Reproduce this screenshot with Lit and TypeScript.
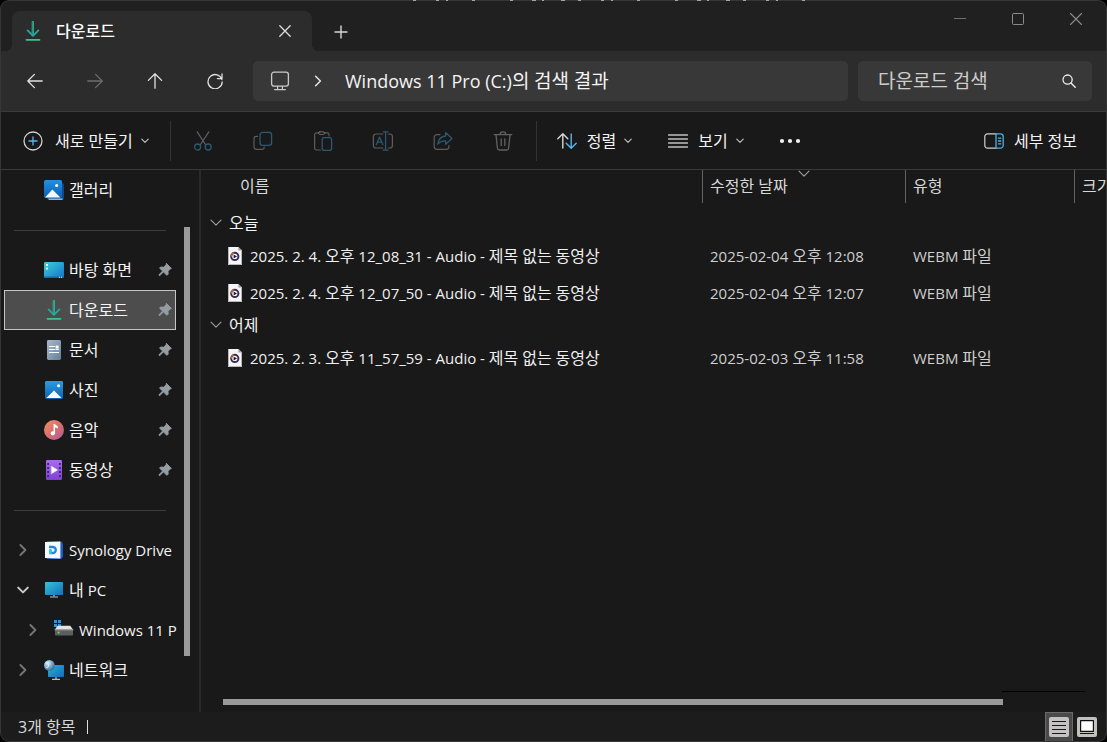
import { LitElement, html, svg, css, nothing } from "lit";
import type { TemplateResult } from "lit";
import { customElement, state } from "lit/decorators.js";
import { classMap } from "lit/directives/class-map.js";

const icon = (w: number, h: number, body: unknown) => html`<svg
  class="icon" width=${w} height=${h} viewBox="0 0 ${w} ${h}" fill="none"
  stroke-linecap="round" stroke-linejoin="round" aria-hidden="true">${body}</svg>`;

/* Hangul is set one pixel larger than the Latin text that surrounds it. */
const mixed = (text: string) => html`<span class="mixed">${text
  .split(/([\uac00-\ud7a3]+)/)
  .map((part, i) => (i % 2 ? html`<span class="ko">${part}</span>` : part))}</span>`;

const icons: Record<string, TemplateResult> = {
  download: icon(20, 20, svg`
    <defs><linearGradient id="dl" x1="0" y1="0" x2="0" y2="1"><stop offset="0" stop-color="#3cc08e"/><stop offset="1" stop-color="#1fa9a0"/></linearGradient></defs>
    <path d="M9.5 0.5h1v14h-1z" fill="url(#dl)" stroke="#2bb596" stroke-width=".8"/>
    <path d="M4.6 9.4 10 14.8l5.4-5.4" stroke="#22ab9d" stroke-width="1.8"/>
    <path d="M3.5 18.8h13" stroke="#38c48c" stroke-width="1.8"/>`),
  close: icon(12, 12, svg`<path d="M.8.8l10.4 10.4M11.2.8.8 11.2" stroke="#dedede" stroke-width="1.3"/>`),
  plus: icon(14, 14, svg`<path d="M7 1v12M1 7h12" stroke="#d6d6d6" stroke-width="1.4"/>`),
  min: icon(12, 12, svg`<path d="M0 5.5h12" stroke="#6f6f6f"/>`),
  max: icon(12, 12, svg`<rect x=".5" y=".5" width="11" height="11" rx="1" stroke="#8a8a8a"/>`),
  winClose: icon(12, 12, svg`<path d="M.5.5l11 11M11.5.5l-11 11" stroke="#8a8a8a" stroke-width="1.1"/>`),
  back: icon(16, 16, svg`<path d="M15.2 8H1M7.4 1.4.8 8l6.6 6.6" stroke="#e0e0e0" stroke-width="1.3"/>`),
  forward: icon(16, 16, svg`<path d="M.8 8H15M8.6 1.4 15.2 8l-6.6 6.6" stroke="#6c6c6c" stroke-width="1.3"/>`),
  up: icon(16, 16, svg`<path d="M8 15.2V1M1.4 7.4 8 .8l6.6 6.6" stroke="#e0e0e0" stroke-width="1.3"/>`),
  refresh: icon(16, 16, svg`<path d="M14.9 6.6A7.1 7.1 0 1 0 15.2 9M15 1v4.6h-4.6" stroke="#e0e0e0" stroke-width="1.3"/>`),
  monitor: icon(20, 20, svg`<rect x="1.6" y="1.2" width="16.8" height="14" rx="2.4" stroke="#c9c9c9" stroke-width="1.3"/><path d="M7.6 15.4v3M12.4 15.4v3M4.6 18.6h10.8" stroke="#c9c9c9" stroke-width="1.2"/>`),
  crumb: icon(8, 12, svg`<path d="M1.6 1.2 6.4 6l-4.8 4.8" stroke="#e6e6e6" stroke-width="1.5"/>`),
  search: icon(14, 14, svg`<circle cx="5.6" cy="5.6" r="4.6" stroke="#ededed" stroke-width="1.3"/><path d="M9 9l4.2 4.2" stroke="#ededed" stroke-width="1.4"/>`),
  caret: icon(8, 6, svg`<path d="M.8 1.2 4 4.4l3.2-3.2" stroke="#bdbdbd" stroke-width="1.2"/>`),
  create: icon(20, 20, svg`<circle cx="10" cy="10" r="9" stroke="#d2d2d2" stroke-width="1.3"/><path d="M10 6v8M6 10h8" stroke="#54b8ea" stroke-width="1.3"/>`),
  cut: icon(20, 20, svg`<path d="M4.2.8 12.8 14M15.8.8 7.2 14" stroke="#606060" stroke-width="1.2"/><circle cx="4.6" cy="16" r="3" stroke="#2c5872" stroke-width="1.3"/><circle cx="15.2" cy="16" r="3" stroke="#2c5872" stroke-width="1.3"/>`),
  copy: icon(20, 20, svg`<path d="M4.6 5.4H3.4A2.4 2.4 0 0 0 1 7.8v8A2.6 2.6 0 0 0 3.6 18.4h5.2a2.4 2.4 0 0 0 2.4-2.2" stroke="#5c5c5c" stroke-width="1.2"/><rect x="7" y="1.4" width="11.6" height="13" rx="2.6" stroke="#2c5872" stroke-width="1.3"/>`),
  paste: icon(20, 20, svg`<path d="M7.5 19H3.4A1.8 1.8 0 0 1 1.6 17.2V3.6a1.8 1.8 0 0 1 1.8-1.8H6M11 1.8h3.2A1.8 1.8 0 0 1 16 3.6V5" stroke="#5c5c5c" stroke-width="1.2"/><rect x="5.6" y=".8" width="6" height="2.6" rx="1.3" stroke="#6a6a6a"/><rect x="9.2" y="6.6" width="9.4" height="12.8" rx="1.8" stroke="#2c5872" stroke-width="1.3"/>`),
  rename: icon(22, 20, svg`<path d="M10.8 17H4A2.6 2.6 0 0 1 1.4 14.4V5.6A2.6 2.6 0 0 1 4 3h6.8M16.4 3h1.4a2.6 2.6 0 0 1 2.6 2.6v8.8a2.6 2.6 0 0 1-2.6 2.6h-1.4" stroke="#5c5c5c" stroke-width="1.2"/><path d="M4.4 13.6 7.6 6l3.2 7.6M5.4 11.2h4.4M13.6 1v18M11.2.8h4.8M11.2 19.2h4.8" stroke="#2c5872" stroke-width="1.3"/>`),
  share: icon(20, 20, svg`<path d="M7 3.6H4A2.8 2.8 0 0 0 1.2 6.4v9.2A2.8 2.8 0 0 0 4 18.4h9.2a2.8 2.8 0 0 0 2.8-2.8v-1.2" stroke="#5c5c5c" stroke-width="1.2"/><path d="M12.6 1.6 19 7.4l-6.4 5.8V9.8C9.4 9.6 7 10.6 4.8 13.2 5.4 8.6 8 5.4 12.6 5z" stroke="#2c5872" stroke-width="1.3"/>`),
  trash: icon(20, 20, svg`<path d="M1.2 3.6h17.6M7.2 3.4a2.8 2.6 0 0 1 5.6 0M3 3.8l1.4 13.4a2 2 0 0 0 2 1.8h7.2a2 2 0 0 0 2-1.8L17 3.8M8.2 8v6.4M11.8 8v6.4" stroke="#626262" stroke-width="1.3"/>`),
  sort: icon(20, 16, svg`<path d="M5.8 15V1M.8 5.8l5-5 5 5" stroke="#d8d8d8" stroke-width="1.4"/><path d="M14.2 1v14M9.2 10.2l5 5 5-5" stroke="#54b8ea" stroke-width="1.4"/>`),
  lines: icon(20, 14, svg`<path d="M.5 1h19M.5 5h19M.5 9h19M.5 13h19" stroke="#c0c0c0" stroke-width="1.3"/>`),
  more: icon(22, 6, svg`<circle cx="3" cy="3" r="2.1" fill="#f2f2f2"/><circle cx="11" cy="3" r="2.1" fill="#f2f2f2"/><circle cx="19" cy="3" r="2.1" fill="#f2f2f2"/>`),
  details: icon(20, 16, svg`<path d="M12 .8H3.6A2.8 2.8 0 0 0 .8 3.6v8.8a2.8 2.8 0 0 0 2.8 2.8H12" stroke="#cfcfcf" stroke-width="1.2"/><path d="M12 .8h4.4a2.8 2.8 0 0 1 2.8 2.8v8.8a2.8 2.8 0 0 1-2.8 2.8H12zM14.4 5.2h2.4M14.4 8h2.4M14.4 10.8h2.4" stroke="#4eb0e4" stroke-width="1.3"/>`),
  closed: icon(10, 14, svg`<path d="M2.4 2 7.4 7l-5 5" stroke="#747474" stroke-width="1.9"/>`),
  open: icon(12, 10, svg`<path d="M1.2 2.6 6 7.4l4.8-4.8" stroke="#cacaca" stroke-width="2"/>`),
  thin: icon(12, 8, svg`<path d="M1 1.2 6 6.2l5-5" stroke="#a0a0a0" stroke-width="1.1"/>`),
  pin: icon(16, 16, svg`<path d="M9.6 1.6 14.4 6.4 13 7l-2 2.4.2 2.8-1.4 1L6.4 9.9 2.6 13.8 1.8 13l3.8-4L2.6 6.2l1-1.2 3 .2L9 3z" fill="#969da2" stroke="#969da2" stroke-width=".9"/>`),
  gallery: icon(20, 20, svg`<defs><linearGradient id="gal" x1="0" y1="0" x2="0" y2="1"><stop stop-color="#2292e0"/><stop offset="1" stop-color="#0c5cb4"/></linearGradient></defs>
    <rect x="3" y="3" width="17" height="17" rx="2" fill="#0c4a8c"/><path d="M4 18.5h14.5V20H5z" fill="#8fb4e4"/><rect width="18" height="18" rx="1.6" fill="url(#gal)"/><path d="M1 17.4 8.4 9.6l8 7.8z" fill="#f2f7ff"/><circle cx="12.6" cy="5.4" r="1.5" fill="#fff"/>`),
  desktop: icon(20, 16, svg`<defs><linearGradient id="desk" x1="0" y1="0" x2="1" y2="1"><stop stop-color="#3bd0d8"/><stop offset="1" stop-color="#1474cc"/></linearGradient></defs>
    <rect width="20" height="16" rx="1.2" fill="url(#desk)"/><path d="M0 14.6h20v.4a1 1 0 0 1-1 1H1a1 1 0 0 1-1-1z" fill="#116aa4"/><path d="M2 2h2v2H2zM2 5.5h2v2H2zM15 14.8h1v1h-1zM17 14.8h1v1h-1z" fill="#e8fbff"/>`),
  doc: icon(14, 20, svg`<defs><linearGradient id="doc" x1="0" y1="0" x2="1" y2="1"><stop stop-color="#a9bacb"/><stop offset="1" stop-color="#647f9c"/></linearGradient></defs>
    <rect width="14" height="20" rx="1.4" fill="url(#doc)"/><path d="M2.5 6.5h5M2.5 9.5h5M2.5 12.5h9M9 9.5h2.5" stroke="#fff" stroke-width="1.2"/><path d="M8.6 5.6h3v3h-3z" fill="#fff"/>`),
  photo: icon(18, 18, svg`<defs><linearGradient id="ph" x1="0" y1="0" x2="0" y2="1"><stop stop-color="#2c9ce2"/><stop offset="1" stop-color="#0c62b2"/></linearGradient></defs>
    <rect width="18" height="18" rx="1.4" fill="url(#ph)"/><path d="M1.4 17 9 9.4l7.6 7.6z" fill="#f6faff"/><circle cx="13.6" cy="4.8" r="1.5" fill="#fff"/>`),
  music: icon(20, 20, svg`<defs><linearGradient id="mu" x1="0" y1="0" x2="1" y2="1"><stop stop-color="#f09064"/><stop offset=".5" stop-color="#d8706c"/><stop offset="1" stop-color="#a85aa0"/></linearGradient></defs>
    <circle cx="10" cy="10" r="10" fill="url(#mu)"/><path d="M10.3 4.6v8.4" stroke="#fff" stroke-width="1.5"/><path d="M10 4.6h1.2l2.6 1.6v2.2L10.4 7z" fill="#fff"/><circle cx="8.8" cy="13.3" r="2.1" fill="#fff"/>`),
  video: icon(16, 20, svg`<defs><linearGradient id="vi" x1="0" y1="0" x2="0" y2="1"><stop stop-color="#a86cea"/><stop offset="1" stop-color="#7e42d2"/></linearGradient></defs>
    <rect width="16" height="20" rx="1.2" fill="url(#vi)"/><path d="M1.2 3h1.8v2H1.2zM1.2 7h1.8v2H1.2zM1.2 11h1.8v2H1.2zM1.2 15h1.8v2H1.2zM13 3h1.8v2H13zM13 7h1.8v2H13zM13 11h1.8v2H13zM13 15h1.8v2H13z" fill="#40207c"/><path d="M5.6 6.4 11.4 10l-5.8 3.6z" fill="#fff" stroke="#fff" stroke-width=".6"/>`),
  synology: icon(18, 18, svg`<path d="M2 .4h14.6L18 3v13l-2 2H2z" fill="#1c5cc0"/><path d="M0 1l15.4-.6v17.2L0 17z" fill="#f7fafd"/><path d="M4 6h3.8a3 3 0 0 1 0 6H5.400V9" stroke="#2385e4" stroke-width="2.300" stroke-linecap="butt" stroke-linejoin="miter"/><path d="M5.400 8v5" stroke="#35c8e4" stroke-width="2.300" stroke-linecap="butt"/>`),
  pc: icon(18, 16, svg`<defs><linearGradient id="pc" x1="0" y1="0" x2="1" y2="1"><stop stop-color="#34c4d8"/><stop offset="1" stop-color="#1470bc"/></linearGradient></defs>
    <rect width="18" height="13" rx=".8" fill="url(#pc)"/><path d="M8 13h2v1.5H8z" fill="#74808a"/><path d="M5 14.5h8v1H5z" fill="#b6c0c8"/>`),
  drive: icon(20, 20, svg`<path d="M0 0h3v3H0zM4 0h3v3H4zM0 4h3v3H0zM4 4h3v3H4z" fill="#2c94dc"/><path d="M3.400 5.800h12.800L19 9.400H1z" fill="#e2e2e2"/><rect x="1" y="9.400" width="18" height="6.200" rx=".8" fill="#5c5f62"/><path d="M1 9.800h18" stroke="#c4c4c4" stroke-width=".8"/><circle cx="4.600" cy="12.600" r="1" fill="#5ee25e"/>`),
  network: icon(20, 20, svg`<defs><linearGradient id="ne" x1="0" y1="0" x2="1" y2="1"><stop stop-color="#2cb2d8"/><stop offset="1" stop-color="#126cba"/></linearGradient><radialGradient id="gl" cx=".35" cy=".3" r=".8"><stop stop-color="#e4f4fc"/><stop offset=".5" stop-color="#74a8cc"/><stop offset="1" stop-color="#2c5c8c"/></radialGradient></defs>
    <rect x="4" y="5" width="16" height="12" rx=".8" fill="url(#ne)"/><path d="M11 17h2v2h-2z" fill="#74808a"/><path d="M8 18.8h8v1.1H8z" fill="#b6c0c8"/><circle cx="5.4" cy="5.4" r="5.4" fill="url(#gl)"/><path d="M2 3c2 .2 3 1.6 2.4 3.2S3 8 2 7.4" stroke="#ddeef8"/>`),
  media: icon(14, 18, svg`<path d="M0 0h10.4L14 3.6V18H0z" fill="#f6f6f8"/><path d="M10.4 0v3.6H14z" fill="#9c9c9c"/><path d="M.5 0v17.5h13V4" stroke="#b8b8bc" stroke-linejoin="miter"/><circle cx="6.8" cy="9.4" r="3.6" fill="#fff" stroke="#3a2c52" stroke-width="2"/><path d="M3.2 9A3.6 3.6 0 0 1 5.600 6" stroke="#b8643c" stroke-width="1.600"/><path d="M5.600 7.400 9 9.400 5.600 11.400z" fill="#1e1a34"/>`),
  listView: icon(20, 20, svg`<rect width="20" height="20" rx="2" fill="#c4c2c3"/><path d="M3 4.500h14M3 8.500h14M3 12.500h14M3 16.500h14" stroke="#161616" stroke-linecap="butt"/>`),
  thumbView: icon(20, 20, svg`<rect width="20" height="20" rx="2" fill="#c0c0be"/><rect x="3.6" y="3.6" width="12.8" height="10.8" fill="#fff" stroke="#101010" stroke-width="1.2"/><path d="M3 16.5h14" stroke="#101010" stroke-linecap="butt"/>`),
};

interface Place { id: string; label: string; art: string; pinned?: boolean; toggle?: "open" | "closed"; child?: boolean }
interface FileRow { name: string; modified: string; kind: string }

const places: (Place | null)[] = [
  { id: "gallery", label: "갤러리", art: "gallery" },
  null,
  { id: "desktop", label: "바탕 화면", art: "desktop", pinned: true },
  { id: "downloads", label: "다운로드", art: "download", pinned: true },
  { id: "documents", label: "문서", art: "doc", pinned: true },
  { id: "pictures", label: "사진", art: "photo", pinned: true },
  { id: "music", label: "음악", art: "music", pinned: true },
  { id: "videos", label: "동영상", art: "video", pinned: true },
  null,
  { id: "synology", label: "Synology Drive", art: "synology", toggle: "closed" },
  { id: "pc", label: "내 PC", art: "pc", toggle: "open" },
  { id: "c", label: "Windows 11 P", art: "drive", toggle: "closed", child: true },
  { id: "network", label: "네트워크", art: "network", toggle: "closed" },
];

const groups: { label: string; files: FileRow[] }[] = [
  { label: "오늘", files: [
    { name: "2025. 2. 4. 오후 12_08_31 - Audio - 제목 없는 동영상", modified: "2025-02-04 오후 12:08", kind: "WEBM 파일" },
    { name: "2025. 2. 4. 오후 12_07_50 - Audio - 제목 없는 동영상", modified: "2025-02-04 오후 12:07", kind: "WEBM 파일" },
  ] },
  { label: "어제", files: [
    { name: "2025. 2. 3. 오후 11_57_59 - Audio - 제목 없는 동영상", modified: "2025-02-03 오후 11:58", kind: "WEBM 파일" },
  ] },
];

const base = css`
  * { box-sizing: border-box; }
  button, input { font: inherit; color: inherit; background: none; border: 0; padding: 0; margin: 0; }
  button { display: flex; align-items: center; justify-content: center; white-space: nowrap; }
  .icon { display: block; flex: none; }
  .mixed { font-size: 15px; white-space: pre; }
  .ko { font-size: 16px; }
`;

@customElement("explorer-sidebar")
class ExplorerSidebar extends LitElement {
  @state() private current = "downloads";

  static styles = [base, css`
    :host { display: flex; min-height: 0; border-right: 2px solid #2a2a2a; }
    ul { list-style: none; margin: 0; padding: 0 0 0 4px; width: 176px; flex: none; }
    li { height: 40px; }
    .rule { display: flex; align-items: center; padding: 0 10px; }
    .rule hr { flex: 1; margin: 0; border: 0; border-top: 1px solid #3d3d3d; }
    .place { width: 100%; height: 40px; justify-content: flex-start; padding: 0 2px 0 8px; border: 1px solid transparent; color: #f4f4f4; }
    .place.child { padding-left: 18px; }
    .place.current { background: #4d4d4d; border-color: #c4c4c4; }
    .toggle { flex: none; width: 20px; display: flex; justify-content: center; margin-right: 11px; }
    .art { flex: none; width: 20px; display: flex; justify-content: center; margin-right: 5px; }
    .label { flex: 1; text-align: left; }
    .scroll { flex: 1; display: flex; padding: 57px 8px 56px; }
    .thumb { width: 6px; background: #9a9a9a; }
  `];

  render() {
    return html`
      <ul>
        ${places.map((p) => p === null
          ? html`<li class="rule"><hr /></li>`
          : html`<li>
              <button class=${classMap({ place: true, child: !!p.child, current: p.id === this.current })}
                @click=${() => { this.current = p.id; }}>
                <span class="toggle">${p.toggle ? icons[p.toggle] : nothing}</span>
                <span class="art">${icons[p.art]}</span>
                <span class="label">${/[A-Z]/.test(p.label) ? mixed(p.label) : p.label}</span>
                ${p.pinned ? icons.pin : nothing}
              </button>
            </li>`)}
      </ul>
      <div class="scroll"><div class="thumb"></div></div>`;
  }
}

@customElement("file-list")
class FileList extends LitElement {
  static styles = [base, css`
    :host { display: flex; flex-direction: column; min-width: 0; overflow: hidden; }
    .view { flex: 1; min-height: 0; overflow: hidden; }
    table { width: 100%; table-layout: fixed; border-collapse: collapse; }
    .date { width: 203px; }
    .kind { width: 169px; }
    .size { width: 33px; }
    th { position: relative; padding: 0 0 6px; font-weight: 400; text-align: left; color: #d8d8d8; }
    th button { width: 100%; height: 33px; justify-content: flex-start; padding: 0 0 2px 7px; border-left: 1px solid #636363; }
    th:first-child button { padding-left: 39px; border: 0; }
    .sorted { position: absolute; top: 0; left: 50%; margin-left: -6px; }
    td { height: 37px; padding: 0 0 0 8px; white-space: nowrap; color: #cfcfcf; }
    td.name { padding-left: 27px; color: #f0f0f0; }
    .cell { display: flex; align-items: center; gap: 8px; }
    td.group { height: 28px; padding-left: 9px; }
    .group button { gap: 7px; color: #f4f4f4; }
    .line { height: 1px; width: 83px; margin: 0 22px 0 auto; background: #000; }
    .scroll { padding: 7px 104px 7px 22px; }
    .thumb { height: 6px; background: #9a989a; }
  `];

  render() {
    return html`
      <div class="view">
        <table>
          <colgroup><col /><col class="date" /><col class="kind" /><col class="size" /></colgroup>
          <thead>
            <tr>
              <th scope="col"><button>이름</button></th>
              <th scope="col"><button>수정한 날짜</button><span class="sorted">${icons.thin}</span></th>
              <th scope="col"><button>유형</button></th>
              <th scope="col"><button>크기</button></th>
            </tr>
          </thead>
          ${groups.map((g) => html`
            <tbody>
              <tr><td class="group" colspan="4"><button>${icons.thin}${g.label}</button></td></tr>
              ${g.files.map((f) => html`
                <tr>
                  <td class="name"><div class="cell">${icons.media}${mixed(f.name)}</div></td>
                  <td>${mixed(f.modified)}</td>
                  <td>${mixed(f.kind)}</td>
                  <td></td>
                </tr>`)}
            </tbody>`)}
        </table>
      </div>
      <div class="line"></div>
      <div class="scroll"><div class="thumb"></div></div>`;
  }
}

@customElement("app-root")
class AppRoot extends LitElement {
  @state() private layout = "list";

  static styles = [base, css`
    :host { display: block; background: #000; font: 16px/24px "Open Sans", "Noto Sans CJK KR", sans-serif; color: #f4f4f4; }
    .window { position: relative; display: flex; flex-direction: column; height: 100vh; background: #191919; border-radius: 9px; overflow: hidden; }
    .frame { position: absolute; inset: 0; border: 1px solid #363636; border-radius: 9px; pointer-events: none; }
    .specks { position: absolute; top: 0; left: 410px; }
    .title { display: flex; align-items: flex-start; height: 51px; padding: 0 2px 0 12px; background: #202020; }
    .tab { position: relative; display: flex; align-items: center; width: 300px; height: 40px; margin-top: 11px; padding: 0 12px 0 11px; background: #2c2c2c; border-radius: 8px 8px 0 0; }
    .tab::before, .tab::after { content: ""; position: absolute; bottom: 0; width: 6px; height: 6px; }
    .tab::before { left: -6px; background: radial-gradient(circle at 0 0, #202020 6px, #2c2c2c 6px); }
    .tab::after { right: -6px; background: radial-gradient(circle at 100% 0, #202020 6px, #2c2c2c 6px); }
    .tab .label { flex: 1; margin-left: 13px; font-weight: 500; color: #fff; }
    .tab button { width: 30px; height: 30px; }
    .add { width: 58px; height: 40px; margin-top: 12px; }
    .controls { display: flex; margin-left: auto; }
    .controls button { width: 58px; height: 38px; }
    .nav { display: flex; align-items: center; height: 60px; padding: 0 15px 0 5px; background: #2c2c2c; }
    .nav > button { width: 60px; height: 40px; }
    .address, .search { display: flex; align-items: center; height: 40px; background: #383838; border-radius: 5px; font-size: 19px; }
    .address { flex: 1; margin: 0 10px 0 8px; padding-left: 17px; }
    .address .crumb { width: 55px; display: flex; justify-content: center; }
    .address .mixed { font-size: 18px; }
    .address .ko { font-size: 19px; }
    .search { width: 234px; padding: 0 16px 0 20px; }
    .search input { flex: 1; min-width: 0; outline: 0; }
    .search input::placeholder { color: #cdcdcd; opacity: 1; }
    .tools { display: flex; align-items: center; height: 59px; border: solid #3a3a3a; border-width: 1px 0; }
    .tools button { height: 40px; gap: 10px; }
    .tools .caret { margin-left: -2px; }
    .tools .create { padding: 0 21px 0 23px; gap: 12px; }
    .tools .create .caret { margin-left: -4px; }
    .acts { display: flex; padding: 0 3px 0 2px; border: solid #333; border-width: 0 1px; }
    .acts button { width: 60px; }
    .tools .drop { padding: 0 0 0 20px; }
    .tools .view { padding-left: 36px; }
    .tools .more { padding: 0 15px; margin-left: 20px; }
    .tools .info { margin-left: auto; padding-right: 30px; }
    .body { flex: 1; min-height: 0; display: grid; grid-template-columns: 201px minmax(0, 1fr); }
    .status { display: flex; align-items: center; height: 30px; padding: 0 6px 0 18px; background: #1c1c1c; color: #d8d8d8; }
    .bar { width: 1px; height: 14px; margin-left: 12px; background: #e0e0e0; }
    .modes { display: flex; margin-left: auto; }
    .modes button { width: 28px; height: 30px; border: 1px solid transparent; }
    .modes .on { background: #4a4a4a; border-color: #6a6a6a; }
  `];

  render() {
    const mode = (id: string, label: string, art: TemplateResult) => html`<button
      class=${classMap({ on: this.layout === id })} aria-label=${label}
      @click=${() => { this.layout = id; }}>${art}</button>`;
    const caret = html`<span class="caret">${icons.caret}</span>`;
    return html`
      <div class="window">
        <header class="title">
          <div class="tab">${icons.download}<span class="label">다운로드</span><button aria-label="탭 닫기">${icons.close}</button></div>
          <button class="add" aria-label="새 탭">${icons.plus}</button>
          <div class="controls">
            <button aria-label="최소화">${icons.min}</button>
            <button aria-label="최대화">${icons.max}</button>
            <button aria-label="닫기">${icons.winClose}</button>
          </div>
        </header>
        <nav class="nav">
          <button aria-label="뒤로">${icons.back}</button>
          <button aria-label="앞으로" disabled>${icons.forward}</button>
          <button aria-label="위로">${icons.up}</button>
          <button aria-label="새로 고침">${icons.refresh}</button>
          <div class="address">
            <button aria-label="내 PC">${icons.monitor}</button>
            <span class="crumb">${icons.crumb}</span>
            <button>${mixed("Windows 11 Pro (C:)의 검색 결과")}</button>
          </div>
          <div class="search">
            <input type="text" aria-label="다운로드 검색" placeholder="다운로드 검색" />
            <button aria-label="검색">${icons.search}</button>
          </div>
        </nav>
        <div class="tools">
          <button class="create">${icons.create}<span>새로 만들기</span>${caret}</button>
          <div class="acts">
            <button aria-label="잘라내기" disabled>${icons.cut}</button>
            <button aria-label="복사" disabled>${icons.copy}</button>
            <button aria-label="붙여넣기" disabled>${icons.paste}</button>
            <button aria-label="이름 바꾸기" disabled>${icons.rename}</button>
            <button aria-label="공유" disabled>${icons.share}</button>
            <button aria-label="삭제" disabled>${icons.trash}</button>
          </div>
          <button class="drop">${icons.sort}<span>정렬</span>${caret}</button>
          <button class="drop view">${icons.lines}<span>보기</span>${caret}</button>
          <button class="more" aria-label="더 보기">${icons.more}</button>
          <button class="info">${icons.details}<span>세부 정보</span></button>
        </div>
        <main class="body">
          <explorer-sidebar></explorer-sidebar>
          <file-list></file-list>
        </main>
        <footer class="status">
          <span>3개 항목</span><span class="bar"></span>
          <div class="modes">
            ${mode("list", "자세히", icons.listView)}
            ${mode("thumbs", "큰 아이콘", icons.thumbView)}
          </div>
        </footer>
        <div class="frame"></div>
        <svg class="specks" width="402" height="1" viewBox="0 0 402 1" aria-hidden="true">
          <path d="M3 .5h399" stroke="#a4a4a4" stroke-dasharray="3 20 3 7 2 24 3 35 3 19 4 6 2 17 4 13" />
        </svg>
      </div>`;
  }
}
